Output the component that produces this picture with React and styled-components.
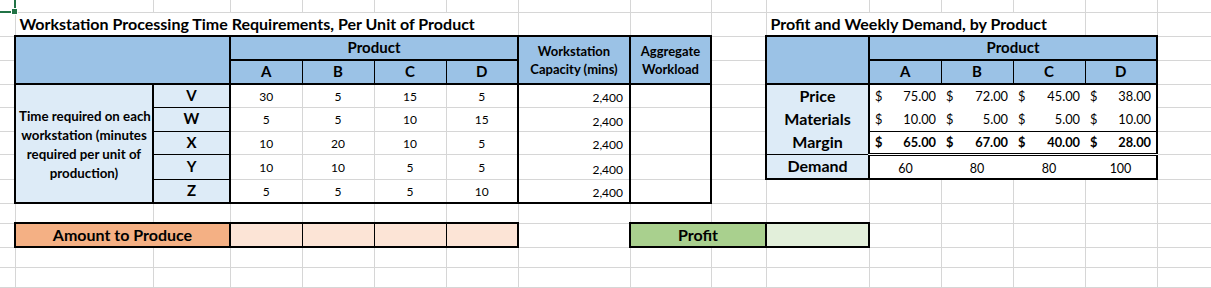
import React from "react";
import styled, { createGlobalStyle, css } from "styled-components";

const GlobalStyle = createGlobalStyle`
  html, body {
    margin: 0;
    padding: 0;
    background: #fff;
    overflow: hidden;
  }
`;

/* sheet geometry, in px, read off the screenshot */
const COLS = [15, 138, 77, 72, 72, 72, 72, 112, 81, 55, 103, 72, 72, 72, 72, 54];
const ROWS = [12, 24, 24, 24, 23, 24, 23, 25, 24, 20, 24, 20, 20, 20];

const LINES = {
  g: "1px solid #d6d6d6",
  t: "1px solid #000",
  T: "2px solid #000",
  d: "3px double #000",
  s: "2px solid #217346",
  n: "none",
};

const FILLS = {
  blue: "#9bc2e6",
  pale: "#ddebf7",
  orange: "#f4b084",
  peach: "#fce4d6",
  green: "#a9d08e",
  mint: "#e2efda",
  white: "#fff",
};

// edge maps: h[r][c] is the line on top of row r, v[r][c] the line left of column c
function buildEdges() {
  const h = Array.from({ length: ROWS.length + 1 }, () => COLS.map(() => "g"));
  const v = ROWS.map(() => Array.from({ length: COLS.length + 1 }, () => "g"));

  const setH = (r, c1, c2, val) => {
    for (let c = c1; c <= c2; c++) h[r][c] = val;
  };
  const setV = (c, r1, r2, val) => {
    for (let r = r1; r <= r2; r++) v[r][c] = val;
  };
  const box = (r1, c1, r2, c2, val) => {
    setH(r1, c1, c2, val);
    setH(r2 + 1, c1, c2, val);
    setV(c1, r1, r2, val);
    setV(c2 + 1, r1, r2, val);
  };

  setH(0, 0, COLS.length - 1, "n");
  setV(0, 0, ROWS.length - 1, "n");
  setV(COLS.length, 0, ROWS.length - 1, "n");

  // selected cell in the corner
  setV(1, 0, 0, "s");
  setH(1, 0, 0, "s");

  // processing time table
  box(2, 1, 8, 8, "T");
  setH(4, 1, 8, "T");
  setH(3, 3, 6, "T");
  setV(3, 2, 8, "T");
  setV(4, 3, 3, "t");
  setV(5, 3, 3, "t");
  setV(6, 3, 3, "t");
  setV(7, 2, 8, "T");
  setV(8, 2, 8, "T");
  setV(2, 4, 8, "T");
  for (let r = 5; r <= 8; r++) setH(r, 2, 2, "t");

  // amount to produce
  box(10, 1, 10, 6, "T");
  setV(3, 10, 10, "T");
  setV(4, 10, 10, "t");
  setV(5, 10, 10, "t");
  setV(6, 10, 10, "t");

  // profit
  box(10, 8, 10, 10, "T");
  setV(10, 10, 10, "T");

  // profit and demand table
  box(2, 10, 7, 14, "T");
  setV(11, 2, 7, "T");
  setH(3, 11, 14, "T");
  setH(4, 10, 14, "T");
  setV(12, 3, 3, "t");
  setV(13, 3, 3, "t");
  setV(14, 3, 3, "t");
  setV(12, 4, 7, "n");
  setV(13, 4, 7, "n");
  setV(14, 4, 7, "n");
  setH(5, 10, 14, "n");
  setH(6, 10, 10, "n");
  setH(6, 11, 14, "t");
  setH(7, 10, 10, "t");
  setH(7, 11, 14, "d");

  return { h, v };
}

const timeRows = [
  ["V", [30, 5, 15, 5]],
  ["W", [5, 5, 10, 15]],
  ["X", [10, 20, 10, 5]],
  ["Y", [10, 10, 5, 5]],
  ["Z", [5, 5, 5, 10]],
];

const moneyRows = [
  ["Price", ["75.00", "72.00", "45.00", "38.00"], false],
  ["Materials", ["10.00", "5.00", "5.00", "10.00"], false],
  ["Margin", ["65.00", "67.00", "40.00", "28.00"], true],
];

const demand = [60, 80, 80, 100];
const letters = ["A", "B", "C", "D"];

function buildCells() {
  const cells = [
    { r: 0, c: 0, kind: "selected" },
    { r: 1, c: 1, cs: 6, kind: "title", text: "Workstation Processing Time Requirements, Per Unit of Product" },
    { r: 1, c: 10, cs: 4, kind: "title", text: "Profit and Weekly Demand, by Product" },

    { r: 2, c: 1, rs: 2, cs: 2, fill: "blue" },
    { r: 2, c: 3, cs: 4, fill: "blue", kind: "header", text: "Product" },
    { r: 2, c: 7, rs: 2, fill: "blue", kind: "small", text: ["Workstation", "Capacity (mins)"] },
    { r: 2, c: 8, rs: 2, fill: "blue", kind: "small", text: ["Aggregate", "Workload"] },
    { r: 2, c: 10, rs: 2, fill: "blue" },
    { r: 2, c: 11, cs: 4, fill: "blue", kind: "header", text: "Product" },

    {
      r: 4, c: 1, rs: 5, fill: "pale", kind: "label",
      text: ["Time required on each", "workstation (minutes", "required per unit of", "production)"],
    },

    { r: 10, c: 1, cs: 2, fill: "orange", kind: "big", text: "Amount to Produce" },
    { r: 10, c: 8, cs: 2, fill: "green", kind: "big", text: "Profit" },
    { r: 10, c: 10, fill: "mint" },
  ];

  letters.forEach((l, i) => {
    cells.push({ r: 3, c: 3 + i, fill: "blue", kind: "header", text: l });
    cells.push({ r: 3, c: 11 + i, fill: "blue", kind: "header", text: l });
    cells.push({ r: 10, c: 3 + i, fill: "peach" });
    cells.push({ r: 7, c: 11 + i, fill: "white", kind: "demand", text: demand[i] });
  });

  timeRows.forEach(([name, values], i) => {
    const r = 4 + i;
    cells.push({ r, c: 2, fill: "pale", kind: "letter", text: name });
    values.forEach((val, j) => cells.push({ r, c: 3 + j, kind: "number", text: val }));
    cells.push({ r, c: 7, kind: "capacity", text: "2,400" });
  });

  moneyRows.forEach(([name, values, bold], i) => {
    const r = 4 + i;
    cells.push({ r, c: 10, fill: "pale", kind: "rowTitle", text: name });
    values.forEach((val, j) =>
      cells.push({ r, c: 11 + j, fill: "white", kind: "money", bold, money: val })
    );
  });
  cells.push({ r: 7, c: 10, fill: "pale", kind: "rowTitle", text: "Demand" });

  return cells;
}

function buildRows() {
  const cells = buildCells();
  const covered = new Set();
  const origin = new Map();
  cells.forEach((cell) => {
    const rs = cell.rs || 1;
    const cs = cell.cs || 1;
    origin.set(`${cell.r}-${cell.c}`, cell);
    for (let r = cell.r; r < cell.r + rs; r++)
      for (let c = cell.c; c < cell.c + cs; c++)
        if (r !== cell.r || c !== cell.c) covered.add(`${r}-${c}`);
  });

  return ROWS.map((_, r) => {
    const row = [];
    COLS.forEach((__, c) => {
      const key = `${r}-${c}`;
      if (covered.has(key)) return;
      row.push(origin.get(key) || { r, c });
    });
    return row;
  });
}

const kinds = {
  title: css`
    font-weight: 700;
    font-size: 16px;
    text-align: left;
    vertical-align: bottom;
    padding: 0 0 2px 4px;
  `,
  header: css`
    font-weight: 700;
    font-size: 15px;
  `,
  small: css`
    font-weight: 700;
    font-size: 13px;
    line-height: 18.5px;
  `,
  label: css`
    font-weight: 700;
    font-size: 13.3px;
    line-height: 19px;
    padding-top: 2px;
  `,
  letter: css`
    font-weight: 700;
    font-size: 15px;
  `,
  number: css`
    font-size: 12px;
    padding-top: 2px;
  `,
  capacity: css`
    font-size: 12px;
    text-align: right;
    vertical-align: bottom;
    padding: 0 6px 2px 0;
  `,
  money: css`
    font-size: 12.8px;
    padding: 1px 5px 0 5px;
  `,
  rowTitle: css`
    font-weight: 700;
    font-size: 16px;
  `,
  demand: css`
    font-size: 12.5px;
    padding-top: 4px;
  `,
  big: css`
    font-weight: 700;
    font-size: 16px;
  `,
  selected: css`
    position: relative;
  `,
};

const Sheet = styled.table`
  border-collapse: collapse;
  table-layout: fixed;
  width: ${COLS.reduce((a, b) => a + b, 0)}px;
  font-family: Lato, "Liberation Sans", sans-serif;
  color: #000;
`;

const Col = styled.col`
  width: ${(p) => p.$w}px;
`;

const Row = styled.tr`
  height: ${(p) => p.$h}px;
`;

const Cell = styled.td`
  padding: 0 3px;
  overflow: visible;
  white-space: nowrap;
  text-align: center;
  vertical-align: middle;
  font-size: 12px;
  line-height: 1.15;
  background: ${(p) => (p.$fill ? FILLS[p.$fill] : "transparent")};
  border-top: ${(p) => LINES[p.$top]};
  border-right: ${(p) => LINES[p.$right]};
  border-bottom: ${(p) => LINES[p.$bottom]};
  border-left: ${(p) => LINES[p.$left]};
  font-weight: ${(p) => (p.$bold ? 700 : 400)};
  ${(p) => kinds[p.$kind]}
`;

const Money = styled.span`
  display: flex;
  justify-content: space-between;
`;

const Handle = styled.span`
  position: absolute;
  right: -4px;
  bottom: -4px;
  width: 5px;
  height: 5px;
  background: #217346;
  border: 1px solid #fff;
  z-index: 2;
`;

function CellText({ cell }) {
  if (cell.kind === "selected") return <Handle />;
  if (cell.money)
    return (
      <Money>
        <span>$</span>
        <span>{cell.money}</span>
      </Money>
    );
  if (Array.isArray(cell.text))
    return cell.text.map((line, i) => (
      <React.Fragment key={i}>
        {i > 0 && <br />}
        {line}
      </React.Fragment>
    ));
  return cell.text ?? null;
}

export default function App() {
  const { h, v } = buildEdges();
  const rows = buildRows();

  return (
    <>
      <GlobalStyle />
      <Sheet>
        <colgroup>
          {COLS.map((w, i) => (
            <Col key={i} $w={w} />
          ))}
        </colgroup>
        <tbody>
          {rows.map((row, r) => (
            <Row key={r} $h={ROWS[r]}>
              {row.map((cell) => {
                const rs = cell.rs || 1;
                const cs = cell.cs || 1;
                return (
                  <Cell
                    key={cell.c}
                    rowSpan={rs}
                    colSpan={cs}
                    $fill={cell.fill}
                    $kind={cell.kind}
                    $bold={cell.bold || undefined}
                    $top={h[cell.r][cell.c]}
                    $bottom={h[cell.r + rs][cell.c]}
                    $left={v[cell.r][cell.c]}
                    $right={v[cell.r][cell.c + cs]}
                  >
                    <CellText cell={cell} />
                  </Cell>
                );
              })}
            </Row>
          ))}
        </tbody>
      </Sheet>
    </>
  );
}
